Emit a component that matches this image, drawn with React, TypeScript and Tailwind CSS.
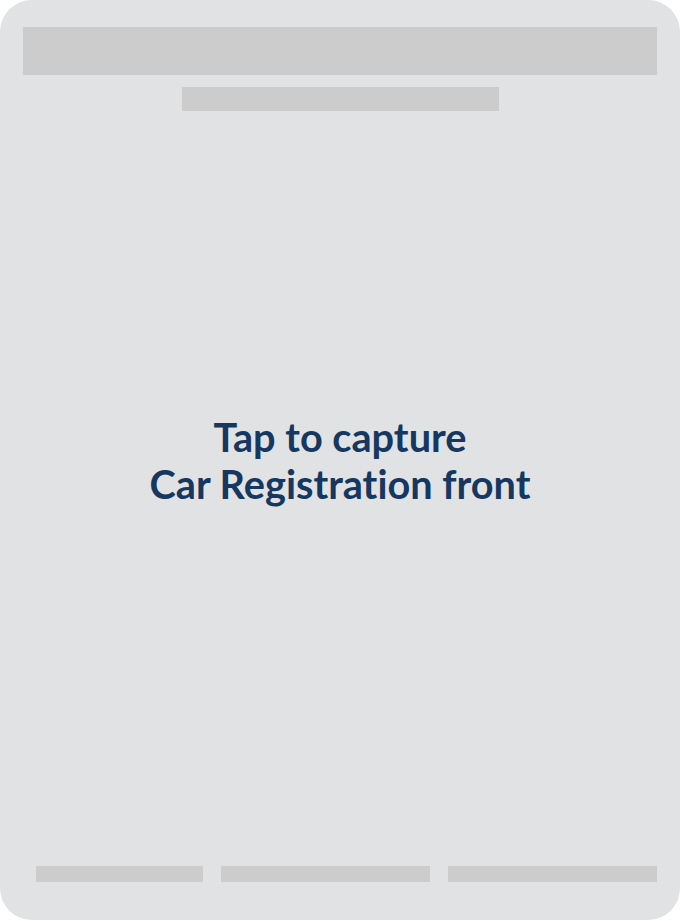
import React from 'react';

const CaptureCard = () => {
  return (
    <div className="w-[680px] h-[921px] bg-white">
      <div className="h-[920px] rounded-[32px] bg-[#e1e2e4] flex flex-col">
        <div className="pt-[27px] px-[23px]">
          <div className="h-[48px] bg-[#cccccc]" />
          <div className="mt-[12px] mx-auto w-[317px] h-[24px] bg-[#cccccc] relative left-[0.5px]" />
        </div>
        <div className="flex-1 flex items-center justify-center">
          <p
            className="text-center text-[39.7px] leading-[47px] font-bold text-[#16375f] mb-[58px] [font-variant-ligatures:none]"
            style={{ fontFamily: 'Lato, "Liberation Sans", sans-serif' }}
          >
            Tap to capture
            <br />
            Car Registration front
          </p>
        </div>
        <div className="flex gap-[18px] pl-[36px] pb-[38px]">
          <div className="w-[167px] h-[16px] bg-[#cccccc]" />
          <div className="w-[209px] h-[16px] bg-[#cccccc]" />
          <div className="w-[209px] h-[16px] bg-[#cccccc]" />
        </div>
      </div>
    </div>
  );
};

export default function App() {
  return <CaptureCard />;
}
